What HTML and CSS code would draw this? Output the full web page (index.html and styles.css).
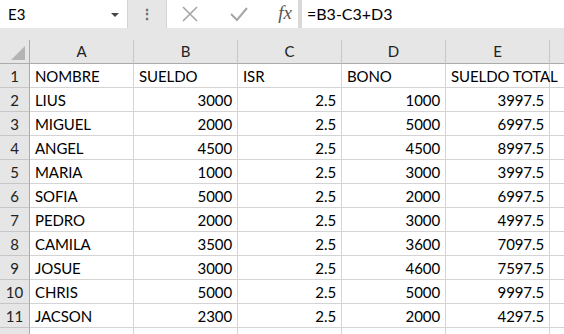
FILE: index.html
```html
<!DOCTYPE html>
<html lang="es">
<head>
    <meta charset="UTF-8">
    <title>Hoja de cálculo</title>
    <link rel="stylesheet" href="styles.css">
</head>
<body>
    <div class="formula-bar">
        <div class="name-box">
            <span>E3</span>
            <span class="caret"></span>
        </div>
        <div class="grip">⋮</div>
        <div class="tools">
            <svg width="18" height="18" viewBox="0 0 18 18"><path d="M2 2 L16 16 M16 2 L2 16" stroke="#a6a6a6" stroke-width="1.6" fill="none"/></svg>
            <svg width="20" height="18" viewBox="0 0 20 18"><path d="M2 9 L8 15 L18 3" stroke="#a6a6a6" stroke-width="2" fill="none"/></svg>
            <span class="fx">fx</span>
        </div>
        <div class="formula">=B3-C3+D3</div>
    </div>

    <div class="sheet" id="sheet"></div>

    <script>
        const sheet = document.getElementById("sheet");
        const rows = [
            ["NOMBRE", "SUELDO", "ISR", "BONO", "SUELDO TOTAL"],
            ["LIUS", 3000, 2.5, 1000, 3997.5],
            ["MIGUEL", 2000, 2.5, 5000, 6997.5],
            ["ANGEL", 4500, 2.5, 4500, 8997.5],
            ["MARIA", 1000, 2.5, 3000, 3997.5],
            ["SOFIA", 5000, 2.5, 2000, 6997.5],
            ["PEDRO", 2000, 2.5, 3000, 4997.5],
            ["CAMILA", 3500, 2.5, 3600, 7097.5],
            ["JOSUE", 3000, 2.5, 4600, 7597.5],
            ["CHRIS", 5000, 2.5, 5000, 9997.5],
            ["JACSON", 2300, 2.5, 2000, 4297.5]
        ];

        function cell(text, cls) {
            const el = document.createElement("div");
            el.className = cls;
            el.textContent = text;
            sheet.appendChild(el);
        }

        cell("", "corner");
        ["A", "B", "C", "D", "E", ""].forEach(l => cell(l, "col-head"));

        rows.forEach((row, i) => {
            cell(i + 1, "row-head");
            row.forEach(v => cell(v, typeof v === "number" ? "c num" : "c"));
            cell("", "c");
        });

        // the partly visible row below the data
        cell("", "row-head");
        for (let i = 0; i < 6; i++) cell("", "c");
    </script>
</body>
</html>
```

FILE: styles.css
```css
* {
    margin: 0;
    padding: 0;
    box-sizing: border-box;
}

body {
    width: 564px;
    height: 334px;
    overflow: hidden;
    background: #e6e6e6;
    font-family: Lato, "Open Sans", sans-serif;
    color: #000;
}

.formula-bar {
    display: flex;
    height: 28px;
    background: #e6e6e6;
    margin-bottom: 12px;
}

.name-box {
    width: 128px;
    background: #fff;
    border-right: 1px solid #d4d4d4;
    display: flex;
    align-items: center;
    justify-content: space-between;
    padding: 0 8px 0 8px;
    font-size: 15px;
}

.caret {
    width: 0;
    height: 0;
    border-left: 4px solid transparent;
    border-right: 4px solid transparent;
    border-top: 4px solid #444;
    margin-top: 2px;
}

.grip {
    width: 38px;
    text-align: center;
    font-size: 14px;
    line-height: 28px;
    color: #666;
    font-weight: 700;
}

.tools {
    width: 136px;
    background: #fff;
    border-left: 1px solid #d4d4d4;
    border-right: 4px solid #d9d9d9;
    display: flex;
    align-items: center;
    justify-content: space-between;
    padding: 0 6px 0 14px;
}

.fx {
    font-family: "Liberation Serif", serif;
    font-style: italic;
    font-size: 19px;
    color: #555;
    margin-top: -2px;
}

.formula {
    flex: 1;
    background: #fff;
    font-size: 16px;
    line-height: 28px;
    padding-left: 5px;
}

.sheet {
    display: grid;
    grid-template-columns: 30px repeat(5, 104px) 30px;
    grid-template-rows: 24px;
    grid-auto-rows: 24px;
    background: #fff;
}

.corner,
.col-head,
.row-head {
    background: #e6e6e6;
    color: #222;
    font-size: 15px;
}

.corner {
    position: relative;
    border-right: 1px solid #ababab;
    border-bottom: 1px solid #ababab;
}

.corner::after {
    content: "";
    position: absolute;
    right: 4px;
    bottom: 3px;
    border-left: 14px solid transparent;
    border-bottom: 14px solid #b4b4b4;
}

.col-head {
    text-align: center;
    line-height: 23px;
    border-right: 1px solid #c6c6c6;
    border-bottom: 1px solid #ababab;
}

.row-head {
    text-align: center;
    line-height: 24px;
    border-right: 1px solid #ababab;
    border-bottom: 1px solid #c6c6c6;
}

.c {
    font-size: 15px;
    line-height: 24px;
    padding: 0 5px;
    white-space: nowrap;
    letter-spacing: -0.1px;
    border-right: 1px solid #d4d4d4;
    border-bottom: 1px solid #d4d4d4;
}

.num {
    text-align: right;
}
```
